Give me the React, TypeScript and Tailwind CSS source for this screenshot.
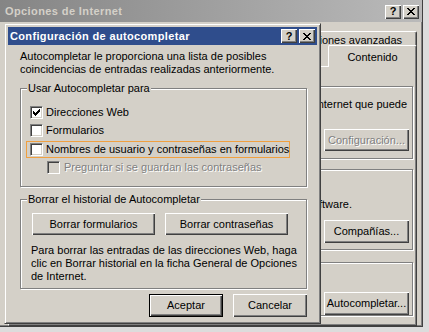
import React from 'react';

const FONT = "font-['Liberation_Sans',Arial,sans-serif]";
const RAISED =
  'shadow-[inset_1px_1px_0_#fff,inset_-1px_-1px_0_#404040,inset_-2px_-2px_0_#808080]';

function CapButton({ kind }: { kind: 'help' | 'close' }) {
  return (
    <span className={`flex h-[14px] w-[16px] items-center justify-center bg-[#d4d0c8] ${RAISED}`}>
      {kind === 'help' ? (
        <span className="text-[11px] font-bold leading-none text-black">?</span>
      ) : (
        <svg width="8" height="7" viewBox="0 0 8 7" shapeRendering="crispEdges">
          <path
            d="M0 0h2v1H0z M6 0h2v1H6z M1 1h2v1H1z M5 1h2v1H5z M2 2h4v1H2z M3 3h2v1H3z M2 4h4v1H2z M1 5h2v1H1z M5 5h2v1H5z M0 6h2v1H0z M6 6h2v1H6z"
            fill="#000"
          />
        </svg>
      )}
    </span>
  );
}

function Button({
  children,
  className = '',
  isDefault = false,
  disabled = false,
}: {
  children: React.ReactNode;
  className?: string;
  isDefault?: boolean;
  disabled?: boolean;
}) {
  return (
    <button
      type="button"
      className={`flex shrink-0 items-center justify-center whitespace-nowrap bg-[#d4d0c8] ${RAISED} ${
        isDefault ? 'border border-black' : ''
      } ${disabled ? 'text-[#808080] [text-shadow:1px_1px_0_#fff]' : 'text-black'} ${className}`}
    >
      {children}
    </button>
  );
}

function Check({ checked = false, disabled = false }: { checked?: boolean; disabled?: boolean }) {
  return (
    <span
      className={`relative inline-block h-[13px] w-[13px] shrink-0 border border-t-[#808080] border-l-[#808080] border-r-white border-b-white shadow-[inset_1px_1px_0_#404040,inset_-1px_-1px_0_#d4d0c8] ${
        disabled ? 'bg-[#d4d0c8]' : 'bg-white'
      }`}
    >
      {checked && (
        <svg
          className="absolute left-[2px] top-[2px]"
          width="7"
          height="7"
          viewBox="0 0 7 7"
          shapeRendering="crispEdges"
        >
          <path
            d="M0 2h1v3H0z M1 3h1v3H1z M2 4h1v3H2z M3 3h1v3H3z M4 2h1v3H4z M5 1h1v3H5z M6 0h1v3H6z"
            fill="#000"
          />
        </svg>
      )}
    </span>
  );
}

// etched group box; the outer window's groups sit behind the dialog, so their captions are left blank
function Group({
  label,
  children,
  className = '',
}: {
  label?: string;
  children: React.ReactNode;
  className?: string;
}) {
  return (
    <fieldset
      className={`min-w-0 border border-[#808080] shadow-[1px_1px_0_#fff,inset_1px_1px_0_#fff] ${className}`}
    >
      <legend className="ml-[6px] h-[13px] bg-[#d4d0c8] px-[1px] leading-[13px]">{label}</legend>
      {children}
    </fieldset>
  );
}

function Tab({
  children,
  selected = false,
  className = '',
}: {
  children: React.ReactNode;
  selected?: boolean;
  className?: string;
}) {
  return (
    <div
      className={`flex shrink-0 justify-center whitespace-nowrap rounded-t-[2px] border-t border-l border-r border-t-white border-l-white border-r-[#404040] bg-[#d4d0c8] shadow-[inset_-1px_0_0_#808080] ${
        selected ? 'relative z-10 -mb-[1px] h-[22px] pt-[5px]' : 'h-[16px] pt-[2px]'
      } ${className}`}
    >
      {children}
    </div>
  );
}

function InternetOptions() {
  return (
    <div className="flex h-[327px] w-[423px] flex-col overflow-hidden border-r border-b border-[#404040] bg-[#d4d0c8] shadow-[inset_-1px_-1px_0_#808080]">
      <div className="flex h-[22px] shrink-0 items-center justify-between bg-linear-to-r from-[#858585] to-[#bababa] pl-[5px] pr-[3px] pt-[1px]">
        <span className="font-bold tracking-[0.4px] text-[#d4d0c8]">Opciones de Internet</span>
        <div className="flex gap-[2px]">
          <CapButton kind="help" />
          <CapButton kind="close" />
        </div>
      </div>

      <div className="flex min-h-0 flex-1 flex-col pl-[8px] pr-[5px] pt-[9px]">
        <div className="flex justify-end">
          <Tab className="px-[14px]">Opciones avanzadas</Tab>
        </div>
        <div className="-mt-[2px] flex items-end justify-end">
          <Tab selected className="w-[89px]">
            Contenido
          </Tab>
        </div>

        <div className="flex min-h-0 flex-1 flex-col border border-t-white border-l-white border-r-[#404040] border-b-[#404040] pl-[14px] pr-[3px] pt-[13px] shadow-[inset_-1px_-1px_0_#808080]">
          <Group>
            <div className="flex flex-col pb-[7px] pr-[3px] pt-[5px]">
              <div className="whitespace-nowrap pr-[2px] text-right">Internet que puede</div>
              <div className="h-[13px]" />
              <div className="mt-[5px] flex justify-end">
                <Button disabled className="h-[22px] w-[85px]">
                  Configuración...
                </Button>
              </div>
            </div>
          </Group>

          <Group className="mt-[4px]">
            <div className="flex flex-col pb-[6px] pr-[3px] pt-[9px]">
              <div className="h-[13px]" />
              <div className="whitespace-nowrap pr-[57px] text-right">software.</div>
              <div className="mt-[9px] flex justify-end">
                <Button className="h-[23px] w-[85px]">Compañías...</Button>
              </div>
            </div>
          </Group>

          <Group className="mt-[6px]">
            <div className="flex flex-col pr-[3px] pt-[23px]">
              <div className="flex justify-end">
                <Button className="h-[23px] w-[85px]">Autocompletar...</Button>
              </div>
            </div>
          </Group>
        </div>
      </div>
    </div>
  );
}

function AutocompleteDialog() {
  return (
    <div className="absolute left-[4px] top-[23px] flex w-[317px] flex-col border border-t-[#d4d0c8] border-l-[#d4d0c8] border-r-[#404040] border-b-[#404040] bg-[#d4d0c8] p-[3px] shadow-[inset_1px_1px_0_#fff,inset_-1px_-1px_0_#808080]">
      <div className="flex h-[18px] items-center justify-between bg-[#2f4d8c] pl-[2px] pr-[2px]">
        <span className="font-bold tracking-[0.35px] text-white">Configuración de autocompletar</span>
        <div className="flex gap-[2px]">
          <CapButton kind="help" />
          <CapButton kind="close" />
        </div>
      </div>

      <div className="flex flex-col pb-[3px] pl-[12px] pr-[10px] pt-[5px]">
        <p>
          Autocompletar le proporciona una lista de posibles
          <br />
          coincidencias de entradas realizadas anteriormente.
        </p>

        <Group label="Usar Autocompletar para" className="mt-[6px]">
          <div className="flex flex-col pb-[10px] pl-[9px] pt-[8px]">
            <label className="flex h-[18px] items-center gap-[3px]">
              <Check checked />
              <span>Direcciones Web</span>
            </label>
            <label className="flex h-[18px] items-center gap-[3px]">
              <Check />
              <span>Formularios</span>
            </label>
            <label className="-ml-[4px] mt-[2px] flex h-[17px] w-[264px] items-center gap-[3px] whitespace-nowrap border border-[#f0a040] pl-[3px]">
              <Check />
              <span>Nombres de usuario y contraseñas en formularios</span>
            </label>
            <label className="flex h-[18px] items-center gap-[4px] whitespace-nowrap pl-[17px]">
              <Check disabled />
              <span className="text-[#808080] [text-shadow:1px_1px_0_#fff]">
                Preguntar si se guardan las contraseñas
              </span>
            </label>
          </div>
        </Group>

        <Group label="Borrar el historial de Autocompletar" className="mt-[6px]">
          <div className="flex flex-col pb-[5px] pl-[10px] pt-[7px]">
            <div className="ml-[1px] flex gap-[10px]">
              <Button className="h-[22px] w-[123px]">Borrar formularios</Button>
              <Button className="h-[22px] w-[123px]">Borrar contraseñas</Button>
            </div>
            <p className="mt-[9px]">
              Para borrar las entradas de las direcciones Web, haga
              <br />
              clic en Borrar historial en la ficha General de Opciones
              <br />
              de Internet.
            </p>
          </div>
        </Group>

        <div className="mt-[5px] flex justify-end gap-[10px]">
          <Button isDefault className="h-[23px] w-[74px]">
            Aceptar
          </Button>
          <Button className="h-[23px] w-[74px]">Cancelar</Button>
        </div>
      </div>
    </div>
  );
}

export default function App() {
  return (
    <div
      className={`relative h-[332px] w-[429px] overflow-hidden bg-[#dcdcdc] text-[11px] leading-[13px] text-black ${FONT}`}
    >
      <InternetOptions />
      <AutocompleteDialog />
    </div>
  );
}
